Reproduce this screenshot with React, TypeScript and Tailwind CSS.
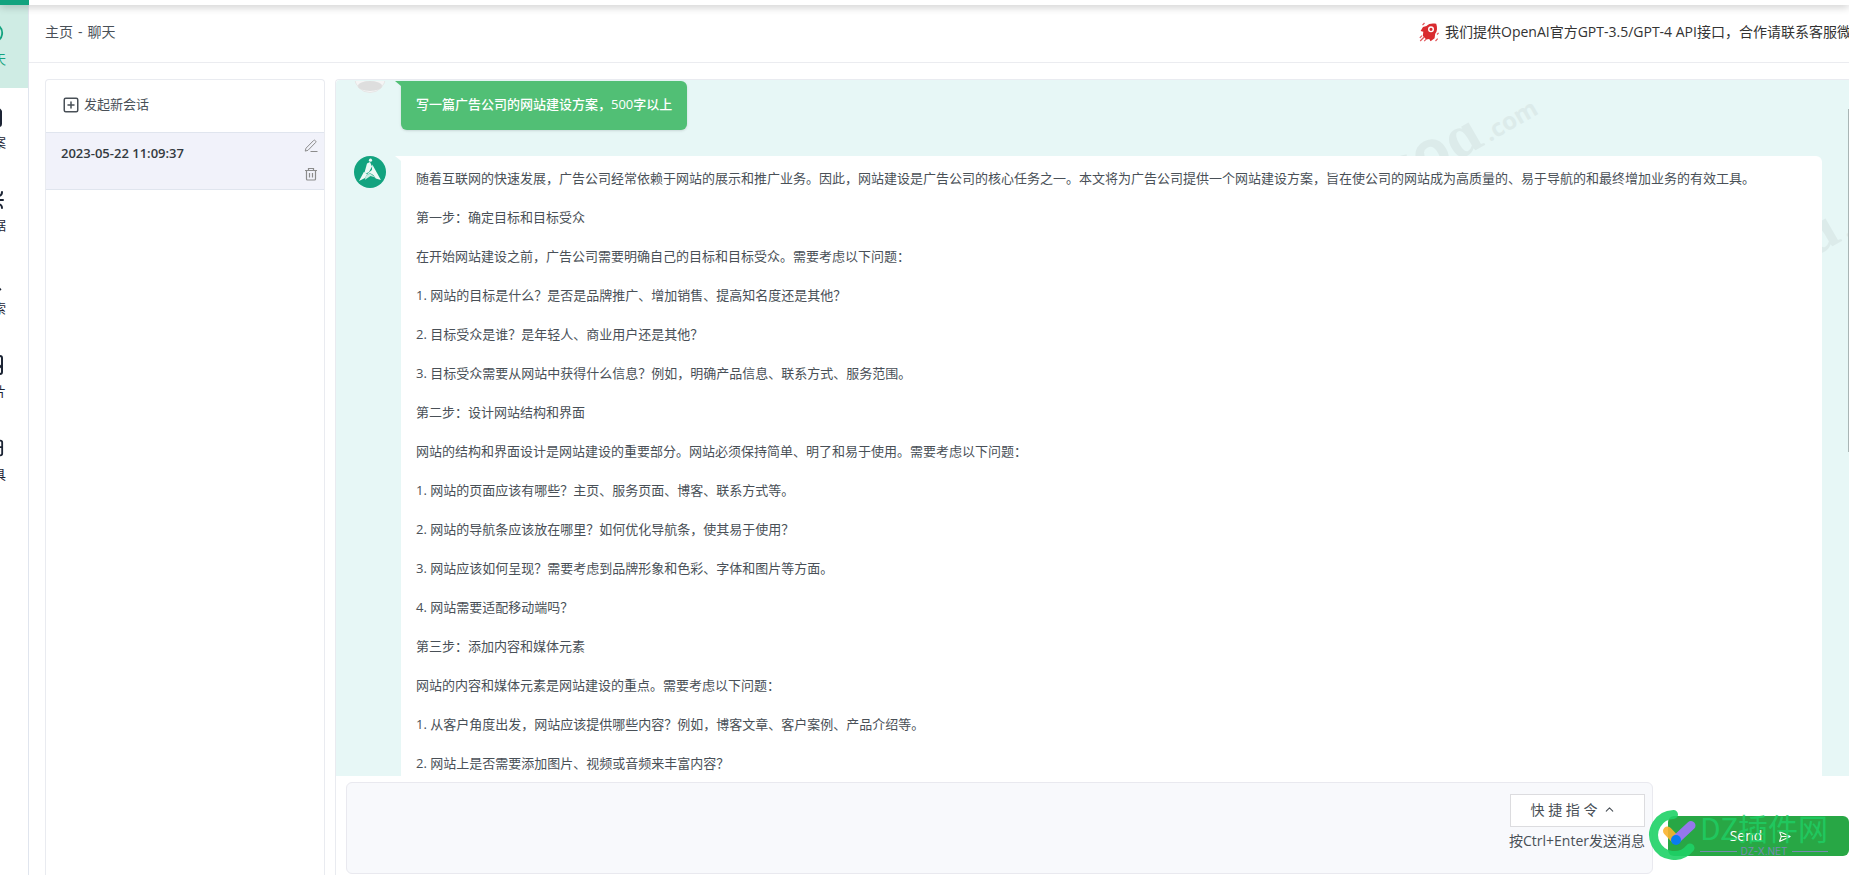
import React from "react";
import {
  Bug,
  ChevronUp,
  FileText,
  Image as ImageIcon,
  MessageCircle,
  Search,
  SendHorizontal,
  SquarePlus,
} from "lucide-react";

type TNavItem = {
  label: string;
  icon: React.ReactNode;
  active?: boolean;
};

const navItems: TNavItem[] = [
  { label: "聊天", icon: <MessageCircle size={22} />, active: true },
  { label: "答案", icon: <FileText size={24} /> },
  { label: "数据", icon: <Bug size={24} /> },
  { label: "搜索", icon: <Search size={20} /> },
  { label: "图片", icon: <ImageIcon size={24} /> },
  { label: "工具", icon: <ToolIcon /> },
];

const answer = [
  "随着互联网的快速发展，广告公司经常依赖于网站的展示和推广业务。因此，网站建设是广告公司的核心任务之一。本文将为广告公司提供一个网站建设方案，旨在使公司的网站成为高质量的、易于导航的和最终增加业务的有效工具。",
  "第一步：确定目标和目标受众",
  "在开始网站建设之前，广告公司需要明确自己的目标和目标受众。需要考虑以下问题：",
  "1. 网站的目标是什么？是否是品牌推广、增加销售、提高知名度还是其他？",
  "2. 目标受众是谁？是年轻人、商业用户还是其他？",
  "3. 目标受众需要从网站中获得什么信息？例如，明确产品信息、联系方式、服务范围。",
  "第二步：设计网站结构和界面",
  "网站的结构和界面设计是网站建设的重要部分。网站必须保持简单、明了和易于使用。需要考虑以下问题：",
  "1. 网站的页面应该有哪些？主页、服务页面、博客、联系方式等。",
  "2. 网站的导航条应该放在哪里？如何优化导航条，使其易于使用？",
  "3. 网站应该如何呈现？需要考虑到品牌形象和色彩、字体和图片等方面。",
  "4. 网站需要适配移动端吗？",
  "第三步：添加内容和媒体元素",
  "网站的内容和媒体元素是网站建设的重点。需要考虑以下问题：",
  "1. 从客户角度出发，网站应该提供哪些内容？例如，博客文章、客户案例、产品介绍等。",
  "2. 网站上是否需要添加图片、视频或音频来丰富内容？",
];

function ToolIcon() {
  return (
    <svg width="22" height="22" viewBox="0 0 24 24" fill="none" stroke="currentColor" strokeWidth="2">
      <rect x="2" y="4" width="20" height="16" rx="2" />
      <path d="M2 11h20M12 11v9M17 4v7" />
    </svg>
  );
}

function Rocket() {
  return (
    <svg width="20" height="20" viewBox="0 0 20 20" className="shrink-0" aria-hidden="true">
      <path
        d="M17.200 1.800C14 1 9.500 1.300 7.500 4L4 5 1.600 9l2.700.8-.5 4 3.400 3.600 3-.4 1.400 2.200 4-3 .6-4.400c2.200-2.500 2.300-6.500 1-10Z"
        fill="#d92b2f"
      />
      <circle cx="12" cy="7.300" r="2.300" fill="none" stroke="#fff" strokeWidth="1.400" />
      <path
        d="M5.500 1 3.500 3.200M.8 15.800 3 13.600M1.200 19l4-4M5.200 19.200l2-2M16.500 19l2.200-2.400M18 12.500l1.600-1.700"
        stroke="#e2555a"
        strokeWidth="1.200"
      />
    </svg>
  );
}

function BotAvatar() {
  return (
    <svg width="32" height="32" viewBox="0 0 32 32" className="shrink-0" aria-hidden="true">
      <circle cx="16" cy="16" r="16" fill="#13a37f" />
      <path d="M13 7.500 16 6l2 4.500-3 5.500-3 1.400-1.400-1.200Z" fill="#eef9f5" />
      <path d="m10 15.700 3 2.600-2 3.600-6 3.200Z" fill="#eef9f5" />
      <path d="m18.300 8.500 8.600 15.500-5.100-1.400-2.500-3.600-3.300-2-5 3.300 3.600-3.600 3.300-2.600Z" fill="#eef9f5" />
      <path d="m11.500 20.300 4.500-3 5.300 4.200-4.800-1.500-5.500 3.700Z" fill="#c9ebe1" />
      <circle cx="16.500" cy="4.200" r="1.600" fill="#eef9f5" />
    </svg>
  );
}

function UserAvatar() {
  return (
    <svg width="32" height="32" viewBox="0 0 32 32" className="shrink-0" aria-hidden="true">
      <circle cx="16" cy="16" r="15.500" fill="#f5f5f5" stroke="#e6e6e6" />
      <circle cx="16" cy="12" r="6" fill="#dedede" />
      <ellipse cx="16" cy="25" rx="12" ry="5" fill="#dedede" />
    </svg>
  );
}

function EditIcon() {
  return (
    <svg width="14" height="14" viewBox="0 0 14 14" fill="none" stroke="currentColor" aria-hidden="true">
      <path d="m2 9.200 7.600-7.700q.8-.8 1.600 0l.4.400q.8.800 0 1.600L4 11.300l-2.800.8ZM6.500 12.500h7" />
    </svg>
  );
}

function TrashIcon() {
  return (
    <svg width="14" height="14" viewBox="0 0 14 14" fill="none" stroke="currentColor" aria-hidden="true">
      <path
        d="M1 3.500h12M4.500 3.500v-2h5v2M2.500 3.500v8.500q0 1 1 1h7q1 0 1-1V3.500M5.500 6v4.500M8.500 6v4.500"
        strokeWidth="1.200"
      />
    </svg>
  );
}

const Sidebar = () => (
  <nav className="flex w-[29px] shrink-0 justify-end overflow-hidden border-r border-[#e0e5ee]">
    <div className="w-[70px] shrink-0">
      {navItems.map(({ label, icon, active }) => (
        <a
          key={label}
          href="#"
          className={`flex h-[83px] flex-col items-center gap-1 pt-4 text-[13px] leading-5 ${
            active ? "bg-[#cfece4] text-[#13a37f]" : "text-[#1c2434]"
          }`}
        >
          <span className="flex h-6 items-center">{icon}</span>
          {label}
        </a>
      ))}
    </div>
  </nav>
);

const Sessions = () => (
  <aside className="w-[280px] shrink-0 rounded-t border border-b-0 border-[#e9ebf0]">
    <button className="flex h-[52px] w-full items-center gap-1 px-4 pb-0.5 text-[13px] text-[#495057]">
      <SquarePlus size={18} strokeWidth={2} />
      发起新会话
    </button>
    <div className="flex h-[58px] justify-between border-y border-[#e0e5ee] bg-[#f1f2fa] pr-1.5 pl-[15px]">
      <span className="pt-2.5 text-[13px] leading-5 font-semibold text-[#343a40]">2023-05-22 11:09:37</span>
      <div className="flex flex-col justify-between pt-1.5 pb-2 text-[#8c8c8c]">
        <button aria-label="编辑">
          <EditIcon />
        </button>
        <button aria-label="删除">
          <TrashIcon />
        </button>
      </div>
    </div>
  </aside>
);

const Watermark = ({ className }: { className: string }) => (
  <div
    aria-hidden="true"
    className={`absolute flex -rotate-30 items-baseline gap-1 font-['Open_Sans'] font-bold text-[#dcebea] ${className}`}
  >
    <span className="text-6xl">soɑ</span>
    <span className="text-2xl">.com</span>
  </div>
);

const Chat = () => (
  <section className="flex min-w-0 flex-1 flex-col rounded-tl border-t border-l border-[#e9ebf0]">
    <div className="relative flex min-h-0 flex-1 flex-col gap-[26px] overflow-hidden rounded-tl bg-[#e7f7f6] pt-px pr-[27px] pl-[18px]">
      <Watermark className="top-6 left-[1040px]" />
      <Watermark className="top-[120px] left-[1397px]" />

      <div className="relative flex items-start gap-[15px]">
        <div className="flex h-3 w-8 items-end overflow-hidden">
          <UserAvatar />
        </div>
        <div className="relative rounded-md rounded-tl-none bg-[#51bf75] px-[15px] pt-3 pb-3.5 text-[13px] leading-[23px] font-medium text-white shadow-sm">
          <span className="absolute top-0 -left-1.5 border-t-[5px] border-l-[6px] border-t-[#51bf75] border-l-transparent" />
          写一篇广告公司的网站建设方案，500字以上
        </div>
      </div>

      <div className="relative flex items-start gap-[15px]">
        <BotAvatar />
        <div className="relative flex min-w-0 flex-1 flex-col gap-4 rounded-md rounded-tl-none bg-white px-[15px] pt-[11px] pb-[15px] text-[13px] leading-[23px] text-[#495057]">
          <span className="absolute top-0 -left-1.5 border-t-[5px] border-l-[6px] border-t-white border-l-transparent" />
          {answer.map((line) => (
            <p key={line}>{line}</p>
          ))}
        </div>
      </div>

      <div className="absolute top-[29px] right-0 h-[343px] w-px bg-[#a9b5b5]" />
    </div>
    <Composer />
  </section>
);

const Composer = () => (
  <form className="flex h-[99px] shrink-0 items-start gap-[15px] pt-1.5 pl-2.5">
    <div className="flex h-[92px] min-w-0 flex-1 rounded-md border border-[#e9e9ef] bg-[#f8f9fc]">
      <textarea aria-label="消息" className="min-w-0 flex-1 resize-none bg-transparent p-3 text-[13px] outline-none" />
      <div className="flex shrink-0 flex-col items-end gap-0.5 pt-[11px] pr-[7px] text-sm text-[#495057]">
        <button
          type="button"
          className="flex h-[33px] w-[135px] items-center justify-center gap-1.5 border border-[#dcdcdf] bg-white pr-2 pb-0.5"
        >
          快 捷 指 令
          <ChevronUp size={13} />
        </button>
        <span className="leading-6">按Ctrl+Enter发送消息</span>
      </div>
    </div>
    <div className="relative mt-[34px] w-[181px]">
      <button
        type="submit"
        className="flex h-10 w-full items-center justify-center gap-4 rounded-md bg-[#28a745] pl-1 text-sm text-white"
      >
        Send
        <SendHorizontal size={13} />
      </button>
      <SiteMark />
    </div>
  </form>
);

const SiteMark = () => (
  <div className="pointer-events-none absolute -top-1.5 -left-5 flex items-start gap-0.5" aria-hidden="true">
    <svg width="50" height="50" viewBox="0 0 50 50" className="shrink-0">
      <path
        d="M25.500 4.500A20.500 20.500 0 1 0 42 38"
        fill="none"
        stroke="#1ed166"
        strokeOpacity=".9"
        strokeWidth="9"
        strokeLinecap="round"
      />
      <path d="m19.500 21 8 8.500" stroke="#fab22d" strokeOpacity=".9" strokeWidth="9" strokeLinecap="round" />
      <path d="m28 29.500 15-14" stroke="#9b74f5" strokeOpacity=".95" strokeWidth="9" strokeLinecap="round" />
      <circle cx="28" cy="30" r="5" fill="#0a7cf0" />
    </svg>
    <div className="flex flex-col pt-px">
      <span className="font-['Noto_Sans_CJK_SC'] text-[30px] leading-8 whitespace-nowrap text-[#1ed166]/80">
        DZ插件网
      </span>
      <span className="flex items-center gap-1 font-['Inter'] text-[10px] leading-4 text-[#778bb0]">
        <span className="h-px flex-1 bg-current" />
        DZ-X.NET
        <span className="h-px flex-1 bg-current" />
      </span>
    </div>
  </div>
);

export default function App() {
  return (
    <div className="flex h-screen flex-col overflow-hidden bg-white font-['Open_Sans','Noto_Sans_CJK_SC',sans-serif]">
      <div className="relative z-10 flex h-[5px] shrink-0 shadow-[0_1px_8px_rgba(0,0,0,0.3)]">
        <div className="w-[29px] bg-[#13a37f]" />
        <div className="flex-1 bg-white" />
      </div>
      <div className="flex min-h-0 flex-1">
        <Sidebar />
        <main className="flex min-w-0 flex-1 flex-col">
          <header className="flex h-[58px] shrink-0 items-center justify-between border-b border-[#ebecf0] pb-1 pl-4 text-sm">
            <div className="flex gap-[5px] text-[#495057]">
              <a href="#">主页</a>
              <span>-</span>
              <span>聊天</span>
            </div>
            <div className="flex w-[430px] items-center gap-1.5 overflow-hidden whitespace-nowrap text-[#333]">
              <Rocket />
              我们提供OpenAI官方GPT-3.5/GPT-4 API接口，合作请联系客服微信
            </div>
          </header>
          <div className="flex min-h-0 flex-1 gap-2.5 pt-4 pl-4">
            <Sessions />
            <Chat />
          </div>
        </main>
      </div>
    </div>
  );
}
